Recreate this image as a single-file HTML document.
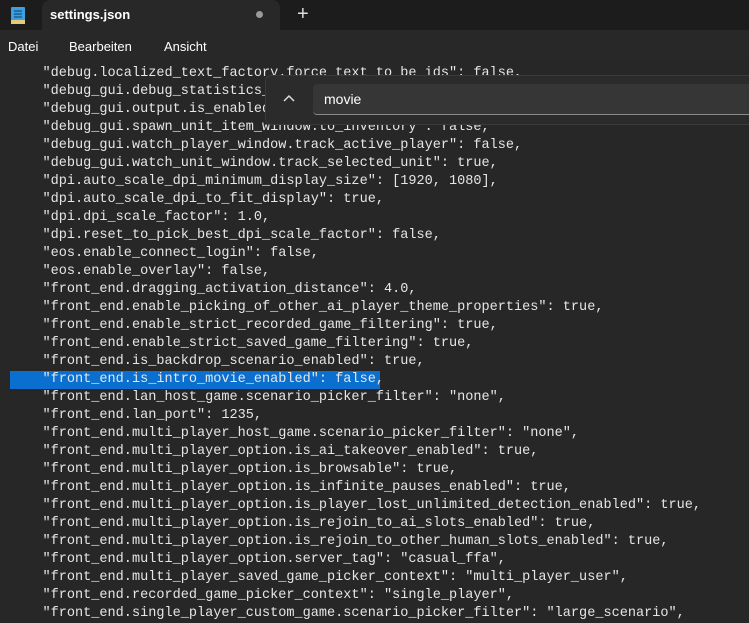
<!DOCTYPE html>
<html><head><style>
body{margin:0;width:749px;height:618px;overflow:hidden;background:#272727;font-family:"Liberation Sans",sans-serif;position:relative}
.tabbar{position:absolute;top:0;left:0;width:749px;height:30px;background:#1c1c1c}
.tab{position:absolute;left:42px;top:0;width:238px;height:30px;background:#282828;border-radius:8px 8px 0 0}
.tab span{position:absolute;left:8px;top:7px;color:#fff;font-size:13px;font-weight:bold}
.dot{position:absolute;left:214px;top:11px;width:7px;height:7px;border-radius:50%;background:#9a9a9a}
.plus{position:absolute;left:297px;top:3px;color:#ddd;font-size:20px}
.menu{position:absolute;top:30px;left:0;width:749px;height:32px;background:#282828}
.menu span{position:absolute;top:9px;color:#fff;font-size:13px}
.ed{position:absolute;top:62px;left:0;width:749px;height:556px;background:#272727}
pre{margin:0;position:absolute;left:10px;top:3px;font-family:"Liberation Mono",monospace;font-size:13.55px;line-height:18px;color:#e6e6e6;white-space:pre}
.sel{position:absolute;left:10px;top:309px;width:370px;height:18px;background:#0a6fcf}
.find{position:absolute;left:265px;top:75px;width:490px;height:48px;background:#2b2b2b;border:1px solid #3a3a3a;border-radius:6px}
.inp{position:absolute;left:313px;top:84px;width:440px;height:31px;background:#363636;border-radius:4px;border-bottom:1px solid #8a8a8a;box-sizing:border-box}
.inp span{position:absolute;left:11px;top:7px;color:#fff;font-size:14px}
</style></head><body>
<div class="tabbar">
<svg style="position:absolute;left:11px;top:6px" width="14" height="18"><rect x="0" y="1" width="14" height="16" rx="1" fill="#3aa0e0"/><rect x="0" y="14" width="14" height="4" fill="#e8c87a"/><g stroke="#0d3a66" stroke-width="1"><line x1="3" y1="5" x2="11" y2="5"/><line x1="3" y1="8" x2="11" y2="8"/><line x1="3" y1="11" x2="11" y2="11"/></g></svg>
<div class="tab"><span>settings.json</span><div class="dot"></div></div>
<div class="plus">+</div>
</div>
<div class="menu"><span style="left:8px">Datei</span><span style="left:69px">Bearbeiten</span><span style="left:164px">Ansicht</span></div>
<div class="ed">
<div class="sel"></div>
<pre>    "debug.localized_text_factory.force_text_to_be_ids": false,
    "debug_gui.debug_statistics_enabled": false,
    "debug_gui.output.is_enabled": false,
    "debug_gui.spawn_unit_item_window.to_inventory": false,
    "debug_gui.watch_player_window.track_active_player": false,
    "debug_gui.watch_unit_window.track_selected_unit": true,
    "dpi.auto_scale_dpi_minimum_display_size": [1920, 1080],
    "dpi.auto_scale_dpi_to_fit_display": true,
    "dpi.dpi_scale_factor": 1.0,
    "dpi.reset_to_pick_best_dpi_scale_factor": false,
    "eos.enable_connect_login": false,
    "eos.enable_overlay": false,
    "front_end.dragging_activation_distance": 4.0,
    "front_end.enable_picking_of_other_ai_player_theme_properties": true,
    "front_end.enable_strict_recorded_game_filtering": true,
    "front_end.enable_strict_saved_game_filtering": true,
    "front_end.is_backdrop_scenario_enabled": true,
    "front_end.is_intro_movie_enabled": false,
    "front_end.lan_host_game.scenario_picker_filter": "none",
    "front_end.lan_port": 1235,
    "front_end.multi_player_host_game.scenario_picker_filter": "none",
    "front_end.multi_player_option.is_ai_takeover_enabled": true,
    "front_end.multi_player_option.is_browsable": true,
    "front_end.multi_player_option.is_infinite_pauses_enabled": true,
    "front_end.multi_player_option.is_player_lost_unlimited_detection_enabled": true,
    "front_end.multi_player_option.is_rejoin_to_ai_slots_enabled": true,
    "front_end.multi_player_option.is_rejoin_to_other_human_slots_enabled": true,
    "front_end.multi_player_option.server_tag": "casual_ffa",
    "front_end.multi_player_saved_game_picker_context": "multi_player_user",
    "front_end.recorded_game_picker_context": "single_player",
    "front_end.single_player_custom_game.scenario_picker_filter": "large_scenario",</pre>
</div>
<div class="find">
<svg style="position:absolute;left:17px;top:18px" width="12" height="8"><path d="M1 7 L6 2 L11 7" stroke="#ddd" stroke-width="1.5" fill="none"/></svg>
</div>
<div class="inp"><span>movie</span></div>
</body></html>
